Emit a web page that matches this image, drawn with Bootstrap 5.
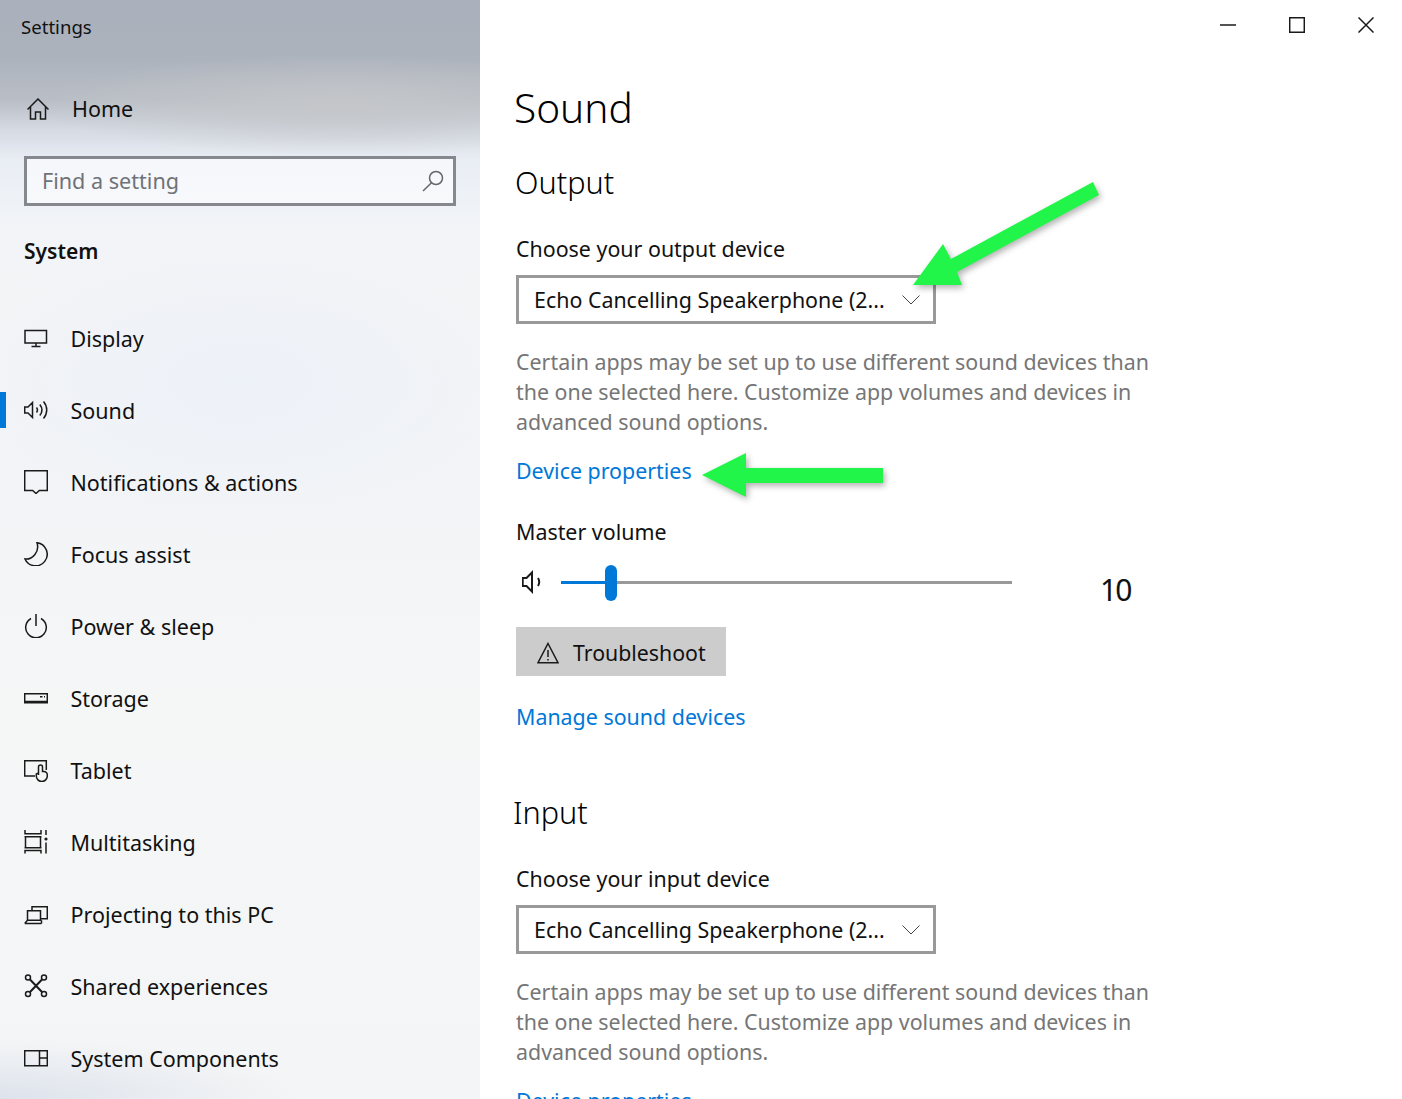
<!DOCTYPE html>
<html lang="en">
<head>
<meta charset="utf-8">
<title>Settings</title>
<link rel="stylesheet" href="https://cdn.jsdelivr.net/npm/bootstrap@5.3.0/dist/css/bootstrap.min.css">
<style>
html,body{height:100%;overflow:hidden}
body{font-family:"Noto Sans","Open Sans",sans-serif;color:#111;background:#fff;font-size:21.4px}
svg.ico{fill:none;stroke:#1a1a1a;stroke-width:1.5;display:block;flex:none}
.shell{height:1099px;overflow:hidden;position:relative}
.side{width:480px;flex:none;height:1099px;
background:
 radial-gradient(ellipse 300px 60px at 0 1099px,#dde3ec 0,rgba(221,227,236,0) 100%),
 radial-gradient(ellipse 300px 150px at 240px 380px,#edf1f8 0,rgba(237,241,248,0) 100%),
 radial-gradient(ellipse 300px 50px at 340px 105px,#c4c6c9 0,rgba(196,198,201,0) 100%),
 linear-gradient(180deg,#a9b0bb 0,#adb3bd 60px,#b9bec6 100px,#d5dae3 130px,#e9edf4 160px,#f2f4f8 230px,#f3f4f6 300px,#f2f4f7 500px,#f5f6f6 700px,#f4f5f6 1099px)}
.apptitle{height:54px;padding-left:21px;font-size:18.6px;line-height:54px}
.homerow{height:54px;padding-left:27px;margin-top:28px;gap:23px;color:#111}
.homerow span{font-size:21.5px}
.searchbox{margin:20px 24px 0;height:50px;border:3px solid #85888c;background:rgba(255,255,255,.55);padding:0 9px 0 15px}
.searchbox input{border:0;background:transparent;padding:0;font:inherit;font-size:21.6px;color:#6f7277;box-shadow:none}
.searchbox input::placeholder{color:#6f7277;opacity:1}
.syshead{margin:26px 0 0 24px;font-weight:600;font-size:21px;line-height:38px;height:38px}
.navlist{margin-top:32px}
.navitem{height:72px;padding:0 0 0 24px;gap:22.5px;color:#111;position:relative;font-size:21.5px}
.navitem span{padding-top:2px}
.navitem:hover{color:#111}
.navitem.on::before{content:"";position:absolute;left:0;top:18px;width:6px;height:36px;background:#0078d7}
.content{padding:0 0 0 36px;position:relative;flex:1;min-width:0}
.winbar{height:49px;padding-right:28px;gap:53px}
.h-page{font-size:40.6px;font-weight:300;line-height:56px;margin:31px 0 0 -2px;height:56px;color:#000}
.h-sec{font-size:30.6px;font-weight:300;line-height:44px;margin:0 0 0 -1px;height:44px;color:#000}
.h-out{margin-top:24px}
.h-in{margin-top:59px;margin-left:-3px}
.lbl{line-height:32px;height:30px}
.lbl-a{margin-top:29px}
.lbl-b{margin-top:31px}
.lbl-c{margin-top:29px}
.dropbox{width:420px;height:49px;border:3px solid #999;margin-top:12px;padding:0 13px 0 15px;background:#fff;white-space:nowrap}
.dropbox span{padding-top:2px}
.note{width:640px;margin:23px 0 0;line-height:30px;color:#767676}
.linkblue{color:#0078d7;text-decoration:none;line-height:32px;display:block;height:30px}
.link-a{margin-top:18px}
.link-b{margin-top:25px}
.volrow{height:48px;margin-top:12px;position:relative}
.voltrack{width:451px;height:3px;background:#999;margin-left:21px;position:relative}
.volfill{height:3px;background:#0078d7}
.volthumb{position:absolute;left:44px;top:-16px;width:12px;height:36px;border-radius:6px;background:#0078d7}
.volnum{font-size:30px;letter-spacing:-2px;margin-left:88px;line-height:48px;position:relative;top:8px}
.tbtn{margin-top:21px;width:210px;height:49px;background:#ccc;border:0;border-radius:0;color:#111;font-size:21.3px;padding:2px 0 0 21px;gap:14px}
.tbtn:hover{background:#ccc;color:#111}
.overlay{position:absolute;left:0;top:0;width:1402px;height:1099px;pointer-events:none;filter:drop-shadow(2px 3px 3px rgba(0,0,0,.3))}
</style>
</head>
<body>
<div class="shell d-flex">
  <aside class="side d-flex flex-column">
    <div class="apptitle">Settings</div>
    <a class="homerow d-flex align-items-center text-decoration-none" href="#">
      <svg class="ico" width="22" height="22" viewBox="0 0 22 22"><path d="M.5 11.500 11 1l10.500 10.500M3.500 9v12h5v-7h5v7h5V9"/></svg>
      <span>Home</span>
    </a>
    <div class="searchbox d-flex align-items-center">
      <input class="form-control flex-grow-1" type="text" placeholder="Find a setting">
      <svg class="ico" width="22" height="22" viewBox="0 0 22 22" style="stroke:#666"><circle cx="14" cy="8" r="6.500"/><path d="M9.500 12.700 1 21"/></svg>
    </div>
    <div class="syshead">System</div>
    <nav class="nav flex-column flex-nowrap navlist">
      <a class="navitem d-flex align-items-center text-decoration-none" href="#">
        <svg class="ico" width="24" height="24" viewBox="0 0 24 24"><path d="M1 4.500h21.500v12.500H1zM12 17v3.500M7.500 20.500h9"/></svg><span>Display</span></a>
      <a class="navitem on d-flex align-items-center text-decoration-none" href="#">
        <svg class="ico" width="24" height="24" viewBox="0 0 24 24"><path d="M.7 9h3.300l4.500-4.500v15L4 15H.7zM12.500 9.500c1.300 1.700 1.300 3.300 0 5M15.800 6.500c2.600 3.300 2.600 7.700 0 11M19.500 3.500c4.300 5 4.300 12 0 17"/></svg><span>Sound</span></a>
      <a class="navitem d-flex align-items-center text-decoration-none" href="#">
        <svg class="ico" width="24" height="24" viewBox="0 0 24 24"><path d="M.7.700h22.600v19.800h-8L12 23.500 8.700 20.500h-8z"/></svg><span>Notifications &amp; actions</span></a>
      <a class="navitem d-flex align-items-center text-decoration-none" href="#">
        <svg class="ico" width="24" height="24" viewBox="0 0 24 24"><path d="M13 .7A11.600 11.600 0 1 1 1 17C8 18 16 10 13 .7z"/></svg><span>Focus assist</span></a>
      <a class="navitem d-flex align-items-center text-decoration-none" href="#">
        <svg class="ico" width="24" height="24" viewBox="0 0 24 24"><path d="M7 4.500a10.300 10.300 0 1 0 10 0M12 0v12"/></svg><span>Power &amp; sleep</span></a>
      <a class="navitem d-flex align-items-center text-decoration-none" href="#">
        <svg class="ico" width="24" height="24" viewBox="0 0 24 24"><path d="M.7 7.700h22.600v9H.7zM.7 15.500h22.600M16 10.800h2.500M20 10.800h1"/></svg><span>Storage</span></a>
      <a class="navitem d-flex align-items-center text-decoration-none" href="#">
        <svg class="ico" width="24" height="24" viewBox="0 0 24 24"><path d="M11 18H.7V2.700h21.600V12M14.500 17V9a2 2 0 0 1 4 0v4.500h1.500a3.300 3.300 0 0 1 3.300 3.300V18a5.500 5.500 0 0 1-11 0v-2l2.200-1"/></svg><span>Tablet</span></a>
      <a class="navitem d-flex align-items-center text-decoration-none" href="#">
        <svg class="ico" width="24" height="24" viewBox="0 0 24 24"><path d="M1 0v3.700h16V0M1.500 6.700h15v11h-15zM.5 6.700h17M.5 17.700h17M1 23.500v-3h16v3M22 0v5M22 12.500v11"/><circle cx="22" cy="9" r="1.600" fill="#1a1a1a" stroke="none"/></svg><span>Multitasking</span></a>
      <a class="navitem d-flex align-items-center text-decoration-none" href="#">
        <svg class="ico" width="24" height="24" viewBox="0 0 24 24"><path d="M8 8V4.700h15.300v12H17M3.500 8.700h13v9.500h-13zM.7 21.500h16.800M.7 21.500l2.800-3.300M17.500 21.500v-3.300"/></svg><span>Projecting to this PC</span></a>
      <a class="navitem d-flex align-items-center text-decoration-none" href="#">
        <svg class="ico" width="24" height="24" viewBox="0 0 24 24"><circle cx="4" cy="3.500" r="2.500"/><circle cx="20" cy="3.500" r="2.500"/><circle cx="4" cy="20" r="2.500"/><circle cx="20" cy="20" r="2.500"/><path d="M6 5.500 18 18M18 5.500 6 18" stroke-width="2"/></svg><span>Shared experiences</span></a>
      <a class="navitem d-flex align-items-center text-decoration-none" href="#">
        <svg class="ico" width="24" height="24" viewBox="0 0 24 24"><path d="M.7 4.700h22.600v15H.7zM15.500 4.700v15M15.500 12h7.800"/></svg><span>System Components</span></a>
    </nav>
  </aside>
  <main class="content">
    <div class="winbar d-flex justify-content-end align-items-center">
      <svg class="ico" width="16" height="16" viewBox="0 0 16 16"><path d="M0 8h16"/></svg>
      <svg class="ico" width="16" height="16" viewBox="0 0 16 16"><path d="M.7.700h14.600v14.600H.7z"/></svg>
      <svg class="ico" width="16" height="16" viewBox="0 0 16 16"><path d="M.5.500l15 15M15.500.500l-15 15"/></svg>
    </div>
    <h1 class="h-page">Sound</h1>
    <h2 class="h-sec h-out">Output</h2>
    <div class="lbl lbl-a">Choose your output device</div>
    <div class="dropbox d-flex align-items-center justify-content-between"><span>Echo Cancelling Speakerphone (2...</span>
      <svg class="ico" width="18" height="10" viewBox="0 0 18 10" style="stroke:#444;stroke-width:1"><path d="M.5.500 9 9 17.500.500"/></svg></div>
    <p class="note">Certain apps may be set up to use different sound devices than the one selected here. Customize app volumes and devices in advanced sound options.</p>
    <a class="linkblue link-a" href="#">Device properties</a>
    <div class="lbl lbl-b">Master volume</div>
    <div class="volrow d-flex align-items-center">
      <svg class="ico" width="24" height="24" viewBox="0 0 24 24" style="margin-left:6px;margin-right:-6px;stroke-width:2"><path d="M.7 8h3.800L10 2.500v19L4.500 16H.7zM16 8c1.500 2.500 1.500 5.500 0 8"/></svg>
      <div class="voltrack"><div class="volfill" style="width:10%"></div><div class="volthumb"></div></div>
      <div class="volnum">10</div>
    </div>
    <button class="btn tbtn d-flex align-items-center" type="button">
      <svg class="ico" width="22" height="22" viewBox="0 0 22 22"><path d="M11 1.500 21 20.700H1zM11 8v7M11 17v1.500"/></svg><span>Troubleshoot</span></button>
    <a class="linkblue link-b" href="#">Manage sound devices</a>
    <h2 class="h-sec h-in">Input</h2>
    <div class="lbl lbl-c">Choose your input device</div>
    <div class="dropbox d-flex align-items-center justify-content-between"><span>Echo Cancelling Speakerphone (2...</span>
      <svg class="ico" width="18" height="10" viewBox="0 0 18 10" style="stroke:#444;stroke-width:1"><path d="M.5.500 9 9 17.500.500"/></svg></div>
    <p class="note">Certain apps may be set up to use different sound devices than the one selected here. Customize app volumes and devices in advanced sound options.</p>
    <a class="linkblue link-a" href="#">Device properties</a>
  </main>
  <svg class="overlay" viewBox="0 0 1402 1099"><polygon fill="#22f54a" points="913,285 943,244 951,259 1093,182 1099,195 957,272 962,285"/><polygon fill="#22f54a" points="702,475 746,453 746,468 883,468 883,483 746,483 746,497"/></svg>
</div>
<script src="https://cdn.jsdelivr.net/npm/bootstrap@5.3.0/dist/js/bootstrap.bundle.min.js"></script>
</body>
</html>
